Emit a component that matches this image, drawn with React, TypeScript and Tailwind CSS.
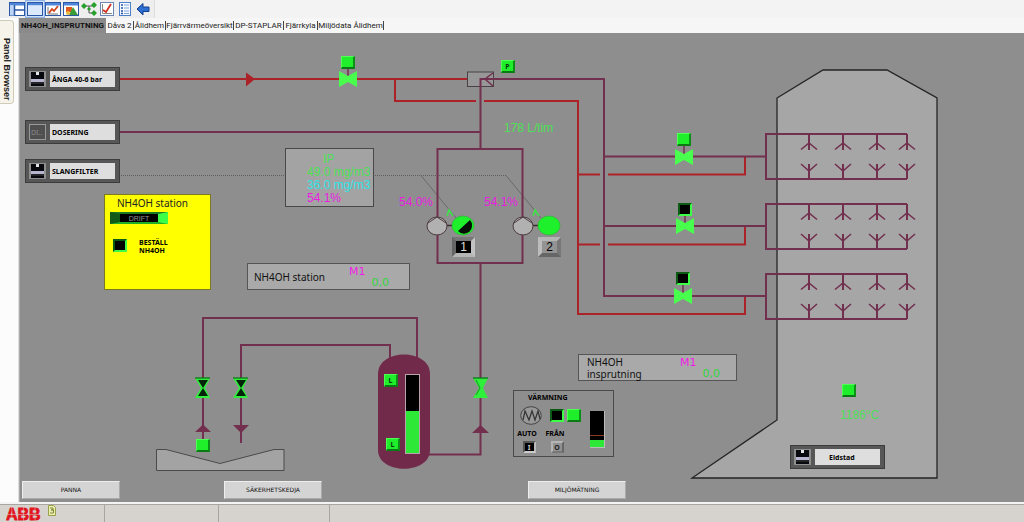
import React from "react";

const PIPE = "#722f4e";
const STEAM = "#ab2329";
const GREEN = "#2ef03a";

type LampProps = { className?: string; on?: boolean; children?: React.ReactNode; label: string };

/* Square bevelled lamp: lit is solid green, unlit has a black core. */
function Lamp({ className = "", on = true, children, label }: LampProps) {
  return (
    <button
      type="button"
      aria-label={label}
      className={
        "flex h-[13px] w-3.5 items-center justify-center p-0 text-[7px] leading-none font-bold text-[#063a0a] " +
        (on
          ? "border-t border-r-2 border-b-2 border-l border-t-[#52ff55] border-r-[#0d8f18] border-b-[#0b7a14] border-l-[#52ff55] bg-[#1fee2b] "
          : "border-2 border-t-[#0c5a14] border-r-[#3dff48] border-b-[#3dff48] border-l-[#0c5a14] bg-black ") +
        className
      }
    >
      {children}
    </button>
  );
}

function CabinetIcon() {
  return (
    <svg width="17" height="16" viewBox="0 0 17 16" className="shrink-0" aria-hidden="true">
      <rect width="17" height="16" fill="#8f8f8f" />
      <path d="M2 1h5v3h3V1h5v7H2z" fill="#08080f" />
      <path d="M7 1h3v3H7z" fill="#e4e4e4" />
      <path d="M2 8h13v3H2z" fill="#b7b5d0" />
      <path d="M2 11h13v4H2z" fill="#08080f" />
      <path d="M2 12h13" stroke="#666" strokeWidth="0.6" />
    </svg>
  );
}

function DiIcon() {
  return (
    <span className="flex h-4 w-[17px] shrink-0 items-center border border-[#9a9a9a] bg-[#505050] pl-px text-[7px] leading-none font-normal text-[#8a8a8a]">
      DI..
    </span>
  );
}

function Plate({ className, icon, children, indent = false }: { className: string; icon: React.ReactNode; children: string; indent?: boolean }) {
  return (
    <button
      type="button"
      className={
        "absolute flex h-6 w-[95px] items-center gap-1 border border-[#3c3c3c] bg-[#575757] pr-1 pl-[3px] text-left text-[7px] leading-none font-bold text-black " +
        className
      }
    >
      {icon}
      <span className={"flex h-4 flex-1 items-center bg-[#dedede] whitespace-nowrap " + (indent ? "pl-3.5" : "pl-0.5")}>{children}</span>
    </button>
  );
}

function Nozzles({ y }: { y: number }) {
  return (
    <g fill="none" stroke={PIPE} strokeWidth="2">
      <path d={`M907 ${y}H766V${y + 45}H907`} />
      {[809, 843, 877, 907].map((x) => (
        <React.Fragment key={x}>
          <path d={`M${x} ${y}v16`} />
          <path d={`M${x - 8} ${y + 15.5}L${x} ${y + 9}l8 6.5`} strokeWidth="1.6" />
          <path d={`M${x} ${y + 45}v-15`} />
          <path d={`M${x - 8} ${y + 30}L${x} ${y + 37}l8 -7`} strokeWidth="1.6" />
        </React.Fragment>
      ))}
    </g>
  );
}

function Valve({ x, y }: { x: number; y: number }) {
  return (
    <g>
      <path d={`M${x} ${y - 13}V${y}`} stroke={PIPE} strokeWidth="1.5" />
      <path d={`M${x - 9} ${y - 8}L${x} ${y - 3}L${x + 9} ${y - 8}V${y + 8}L${x} ${y + 3}L${x - 9} ${y + 8}z`} fill="#48ff4e" />
    </g>
  );
}

function UprightValve({ x, y, closed = false }: { x: number; y: number; closed?: boolean }) {
  return (
    <g>
      <path d={`M${x - 8} ${y - 10}H${x + 7}L${x + 2} ${y}L${x + 7} ${y + 10}H${x - 8}L${x - 2} ${y}z`} fill={GREEN} />
      <path d={`M${x - 8} ${y - 10}H${x + 7}`} stroke="#16801f" strokeWidth="1.5" />
      {closed ? (
        <path d={`M${x - 5} ${y - 8}H${x + 5}L${x} ${y}L${x + 5} ${y + 8}H${x - 5}L${x} ${y}z`} fill="#03240a" />
      ) : (
        <path d={`M${x - 5} ${y - 8}L${x - 1} ${y}L${x - 5} ${y + 7}`} fill="none" stroke="#149622" />
      )}
    </g>
  );
}

function Pump({ x, running }: { x: number; running: boolean }) {
  return (
    <g>
      <path d={`M${x + 10} 225.500h6`} stroke="#3a2a2a" strokeWidth="1.5" />
      <ellipse cx={x} cy="226" rx="10" ry="9" fill="#b1b1b1" stroke="#4c3b3f" />
      <path d={`M${x - 9} 223L${x} 217l9 6`} fill="none" stroke="#4c3b3f" />
      <ellipse cx={x + 26} cy="225.500" rx="11" ry="9.500" fill="#1ff02c" stroke="#27b52f" strokeWidth="0.6" />
      {running && <path d={`M${x + 33} 220a7 7 0 0 1 -12 11z`} fill="#061006" />}
      <path d={`M${x + 10} 216l2 -6 4 6`} fill="none" stroke="#3ce648" strokeWidth="1.5" />
    </g>
  );
}

function Piping() {
  return (
    <svg className="pointer-events-none absolute inset-0 h-full w-full overflow-visible" aria-hidden="true">
      <g transform="translate(-20 -33)" fill="none">
        <path d="M777 98L823 70H887L937 98V478H692L777 420z" fill="#a6a6a6" stroke="#252525" strokeWidth="1.3" />
        <path d="M156.500 449.500H166L220 463.500L274 449.500H284V470.500H156.500z" fill="#a3a3a3" stroke="#4a4a4a" />

        <g stroke="#606060" strokeDasharray="1 1">
          <path d="M119 175.500H506" />
          <path d="M421 175.500L456 218M506 175.500L541 218" strokeDasharray="none" strokeWidth="0.8" />
        </g>

        <g stroke={STEAM} strokeWidth="2">
          <path d="M119 79H468" />
          <path d="M395 79V101H476M484 101H578V314H745V296" />
          <path d="M578 174.500H600M608 174.500H745V157M578 244.500H600M608 244.500H745V227" />
        </g>
        <path d="M246 72.500V86.500L255 79z" fill={STEAM} />

        <rect x="467.500" y="72" width="26" height="14.500" fill="#979797" stroke="#4b4045" />
        <g stroke={PIPE} strokeWidth="2">
          <path d="M119 132H480" />
          <path d="M485 79H604V296H766M604 156.500H766M604 226H766" />
          <path d="M493 73L485 79L493 86" strokeWidth="1.5" />
          <path d="M485 79H480.500V149" />
          <path d="M437.500 149H522.500V263H437.500z" />
          <path d="M480.500 263V454.500H428" />
          <path d="M203 439V318H417V358" />
          <path d="M241 443V345H390V358" />
        </g>
        <Nozzles y={134} />
        <Nozzles y={204} />
        <Nozzles y={274} />

        <path d="M195 432L203 424.500L211 432zM233 425H249L241 433zM472 433L480.500 425L489 433z" fill={PIPE} />

        <path d="M378 374C378 348 430 348 430 374V450C430 475 378 475 378 450z" fill="#722a4b" />
        <Valve x={348} y={79} />
        <Valve x={684} y={157} />
        <Valve x={685} y={226} />
        <Valve x={683} y={296} />
        <UprightValve x={203} y={388} closed />
        <UprightValve x={241} y={388} closed />
        <UprightValve x={481} y={388} />
        <Pump x={437} running />
        <Pump x={523} running={false} />
      </g>
    </svg>
  );
}

function PumpButton({ className, children }: { className: string; children: string }) {
  return (
    <button type="button" className={"absolute flex h-5 w-[23px] items-center justify-center border-4 p-0 font-[Liberation_Sans] text-[12px] leading-none " + className}>
      {children}
    </button>
  );
}

function TotalBox({ className, children }: { className: string; children: React.ReactNode }) {
  return (
    <section className={"absolute flex h-[27px] items-center justify-between border border-[#555] bg-[#a9a9a9] " + className}>
      <h2 className="flex flex-col text-[10px] leading-[12px] text-[#111]">{children}</h2>
      <div className="flex w-10 flex-col font-[DejaVu_Sans] text-[11px] leading-[11px]">
        <span className="text-[#f01ce6]">M1</span>
        <span className="self-end text-[#2fd63b]">0,0</span>
      </div>
    </section>
  );
}

function HeatingPanel() {
  return (
    <section className="absolute top-[357px] left-[493px] flex h-[67px] w-[101px] justify-between border border-[#4a4a4a] pr-2 pl-[3px] text-[7px] leading-[8px] font-bold">
      <div className="flex flex-col">
        <h2 className="mt-[3px] ml-[11px]">VÄRMNING</h2>
        <div className="mt-1 ml-[3px] flex items-center gap-1">
          <svg width="22" height="19" viewBox="0 0 22 19" aria-hidden="true">
            <ellipse cx="11" cy="9.500" rx="10.300" ry="8.800" fill="#999" stroke="#444" />
            <path d="M3 14l2-9 4 9 3-9 3 9 3-9 2 8" fill="none" stroke="#333" strokeWidth="1.200" />
          </svg>
          <div className="ml-1 flex gap-[3px]">
            <Lamp on={false} label="Värmning från" />
            <Lamp label="Värmning till" />
          </div>
        </div>
        <div className="mt-[5px] flex gap-2">
          <label className="flex w-5 flex-col items-center gap-[3px]">
            AUTO
            <button type="button" className="ml-1 flex h-3 w-[13px] items-center justify-center border-2 border-t-[#555] border-r-[#bbb] border-b-[#ccc] border-l-[#555] bg-black text-[7px] leading-none text-[#ccc]">I</button>
          </label>
          <label className="flex w-5 flex-col items-center gap-[3px]">
            FRÅN
            <button type="button" className="ml-1 flex h-3 w-[13px] items-center justify-center border-2 border-t-[#b5b5b5] border-r-[#666] border-b-[#777] border-l-[#b5b5b5] bg-[#919191] text-[7px] leading-none text-[#222]">O</button>
          </label>
        </div>
      </div>
      <div className="mt-5 flex h-[37px] w-[15px] flex-col justify-end border-r border-b border-[#bbb] bg-black">
        <div className="h-px bg-[#8a3a1c]" />
        <div className="mt-1 h-[7px] bg-[#2ee838]" />
      </div>
    </section>
  );
}

function ToolButton({ label, children, active = false }: { label: string; children: React.ReactNode; active?: boolean }) {
  return (
    <button type="button" aria-label={label} className={"flex h-4 w-[18px] items-center justify-center p-0 " + (active ? "bg-[#cfe0f6] outline outline-[#8db2e3]" : "")}>
      <svg width="16" height="14" viewBox="0 0 16 14" aria-hidden="true">
        {children}
      </svg>
    </button>
  );
}

function WindowFrame() {
  return (
    <>
      <rect x="0.500" y="0.500" width="15" height="13" fill="#fff" stroke="#2b57a5" />
      <rect x="1" y="1" width="14" height="2.500" fill="#4f86d9" />
    </>
  );
}

function Toolbar() {
  return (
    <header className="flex h-[18px] shrink-0 bg-[#f3f3f3]">
      <div role="toolbar" aria-label="Verktyg" className="flex items-center border-r border-[#ddd] bg-[#eeeeee] pr-0.5 pl-2">
        <ToolButton label="Paneler">
          <WindowFrame />
          <path d="M1 3.500h4.500v10H1z" fill="#bcd3f5" />
          <path d="M5.500 3v10.500M5.500 8H15" stroke="#2b57a5" strokeWidth="1.500" />
        </ToolButton>
        <ToolButton label="Fönster" active>
          <WindowFrame />
          <path d="M1 3.500h14v9.500H1z" fill="#dce9fb" />
        </ToolButton>
        <ToolButton label="Trendfönster">
          <WindowFrame />
          <path d="M3 5v7h10" stroke="#777" fill="none" />
          <path d="M4 11l3-4 2 2 4-5" stroke="#d2451e" strokeWidth="1.800" fill="none" />
        </ToolButton>
        <ToolButton label="Grafik">
          <WindowFrame />
          <rect x="3" y="5" width="6" height="5" fill="#e2571e" />
          <path d="M10 5l5 8H6z" fill="#3a9c35" />
          <circle cx="5" cy="11" r="2" fill="#e7b93b" />
        </ToolButton>
        <ToolButton label="Struktur">
          <path d="M3 4h9M8 4v7h4" stroke="#555" fill="none" />
          <path d="M3 1l3 3-3 3-3-3zM13 0l3 3-3 3-3-3zM13 8l3 3-3 3-3-3z" fill="#27a02c" />
          <path d="M8 5l2 2-2 2-2-2z" fill="#27a02c" />
        </ToolButton>
        <ToolButton label="Trend">
          <rect x="1.500" y="0.500" width="13" height="13" fill="#fff" stroke="#6d86b8" />
          <path d="M3.500 2v9.500H13" stroke="#888" fill="none" />
          <path d="M4 8l3 2 5-8" stroke="#d22f1e" strokeWidth="1.800" fill="none" />
        </ToolButton>
        <ToolButton label="Lista">
          <rect x="2.500" y="0.500" width="11" height="13" fill="#f5f9ff" stroke="#4d7fc8" />
          <path d="M4 3h2M4 6h2M4 9h2M4 11.500h2" stroke="#1f4fa8" strokeWidth="1.600" />
          <path d="M7 3h5M7 6h5M7 9h5M7 11.500h5" stroke="#7fa3dc" />
        </ToolButton>
        <ToolButton label="Tillbaka">
          <path d="M2 7l6-5.500V5h6v4.500H8V13z" fill="#2d6ed2" stroke="#123f8c" />
        </ToolButton>
      </div>
    </header>
  );
}

const TABS = [
  { name: "NH4OH_INSPRUTNING", width: "w-[87px]" },
  { name: "Dåva 2", width: "w-[28px]" },
  { name: "Ålidhem", width: "w-8" },
  { name: "Fjärrvärmeöversikt", width: "w-[68px]" },
  { name: "DP-STAPLAR", width: "w-[50px]" },
  { name: "Fjärrkyla", width: "w-[34px]" },
  { name: "Miljödata Ålidhem", width: "w-[66px]" },
];

function Tabs() {
  return (
    <div role="tablist" className="flex h-[15px] shrink-0 items-stretch bg-[#f6f6f6] font-[Roboto] text-[8px] leading-none">
      {TABS.map((tab, i) => (
        <button
          key={tab.name}
          type="button"
          role="tab"
          aria-selected={i === 0}
          className={
            "p-0 whitespace-nowrap " +
            tab.width +
            (i === 0 ? " bg-[#8a8a8a] text-center font-bold text-[#111]" : " my-[3px] flex items-center justify-center border-r border-[#444] text-[#222]")
          }
        >
          {tab.name}
        </button>
      ))}
    </div>
  );
}

function StatusBar() {
  return (
    <footer className="flex h-5 shrink-0 border-t-2 border-[#f4f4f4] bg-[#d6d3ce]">
      <div className="flex w-[105px] gap-1.5 border-t border-r border-[#a9a6a1] pl-1.5">
        <svg width="36" height="17" viewBox="0 0 36 17" role="img" aria-label="ABB">
          <text x="0" y="15" fill="#e2131c" fontFamily="Liberation Sans" fontWeight="700" fontSize="16" stroke="#e2131c" strokeWidth="0.800">
            ABB
          </text>
          <path d="M0 9.500H36M5.800 0V17M17.500 0V17M29 0V17" stroke="#d6d3ce" strokeWidth="0.500" />
        </svg>
        <svg width="8" height="11" viewBox="0 0 8 11" aria-hidden="true">
          <path d="M0.500 0.500h5l2 2v8h-7z" fill="#eeeeb0" stroke="#9aa04a" />
          <path d="M2 3h3v2H3M3 5h2.500v3H2" fill="none" stroke="#7d8a3a" />
        </svg>
      </div>
      <div className="w-[114px] border-t border-r border-[#a9a6a1]" />
      <div className="w-[111px] border-t border-r border-[#a9a6a1]" />
      <div className="flex-1 border-t border-[#a9a6a1]" />
    </footer>
  );
}

const bottomButton = "h-[18px] w-[98px] border border-t-[#eee] border-r-[#aaa] border-b-[#aaa] border-l-[#eee] bg-[#d4d4d4] p-0 font-[DejaVu_Sans] text-[6px] leading-none text-[#111]";

export default function App() {
  return (
    <div className="flex min-h-screen flex-col bg-[#fcfcfc] font-[Noto_Sans,sans-serif] text-black">
      <Toolbar />
      <div className="flex flex-1">
        <aside className="w-[19px] shrink-0 border-r border-[#ddd] pt-0.5">
          <button type="button" className="flex h-[84px] w-3.5 items-center justify-center rounded-r-sm border border-l-0 border-[#cfcbb8] bg-[#f6f4ea] p-0 pt-3.5 font-[Liberation_Sans] text-[9px] leading-none font-bold text-[#222] [writing-mode:vertical-rl]">
            Panel Browser
          </button>
        </aside>
        <div className="flex min-w-0 flex-1 flex-col">
          <Tabs />
          <main className="flex flex-1 flex-col overflow-hidden border-l border-[#aaa] bg-[#8e8e8e]">
            <div className="relative min-h-[448px] flex-1">
              <Piping />

              <Plate className="top-[34px] left-[5px]" icon={<CabinetIcon />}>ÅNGA 40-6 bar</Plate>
              <Plate className="top-[87px] left-[5px]" icon={<DiIcon />}>DOSERING</Plate>
              <Plate className="top-[126px] left-[5px]" icon={<CabinetIcon />}>SLANGFILTER</Plate>
              <Plate className="top-[412px] left-[770px]" icon={<CabinetIcon />} indent>Eldstad</Plate>

              <section className="absolute top-[161px] left-[84px] flex h-[96px] w-[107px] flex-col items-start border border-[#7a7a20] bg-[#ffff00] pl-[5px]">
                <h2 className="mt-[3px] ml-[7px] text-[10px] leading-[11px] text-[#222]">NH4OH station</h2>
                <button type="button" className="mt-[3px] flex h-3 w-[58px] items-center border-y-2 border-r-[10px] border-l-[10px] border-t-[#1b7a22] border-r-[#3dff48] border-b-[#1fae2a] border-l-[#115a18] bg-black p-0 font-[Liberation_Sans] text-[7px] leading-none text-[#999]">
                  <span className="w-full text-center">DRIFT</span>
                </button>
                <div className="mt-[15px] ml-[3px] flex items-start gap-3">
                  <Lamp on={false} label="Beställ NH4OH" />
                  <span className="text-[7px] leading-[8px] font-bold">
                    BESTÄLL
                    <br />
                    NH4OH
                  </span>
                </div>
              </section>

              <section className="absolute top-[115px] left-[265px] flex h-[59px] w-[89px] flex-col border border-[#484848] bg-[#a3a3a3] pt-1 pl-[21px] font-[Liberation_Sans] text-[12px] leading-[13px] whitespace-nowrap">
                <span className="ml-4 text-[#4be055]">IP</span>
                <span className="text-[#4be055]">49.0 mg/m3</span>
                <span className="text-[#2fe3e6]">36.0 mg/m3</span>
                <span className="text-[#e91ce0]">54.1%</span>
              </section>

              <output className="absolute top-[88px] left-[484px] font-[Liberation_Sans] text-[12px] leading-[14px] text-[#4be055]">178 L/tim</output>
              <output className="absolute top-[162px] left-[379px] font-[Liberation_Sans] text-[12px] leading-[14px] text-[#e91ce0]">54.0%</output>
              <output className="absolute top-[162px] left-[464px] font-[Liberation_Sans] text-[12px] leading-[14px] text-[#e91ce0]">54.1%</output>
              <output className="absolute top-[375px] left-[820px] font-[Liberation_Sans] text-[12px] leading-[14px] text-[#4be055]">1186°C</output>

              <TotalBox className="top-[230px] left-[227px] w-[163px] pr-5 pl-1.5">NH4OH station</TotalBox>
              <TotalBox className="top-[321px] left-[558px] w-[159px] pr-4 pl-2">
                <span>NH4OH</span>
                <span>insprutning</span>
              </TotalBox>

              <HeatingPanel />

              <Lamp className="absolute top-[23px] left-[321px]" label="Ångventil" />
              <Lamp className="absolute top-[27px] left-[481px]" label="Tryck">P</Lamp>
              <Lamp className="absolute top-[100px] left-[657px]" label="Ventil 1" />
              <Lamp className="absolute top-[170px] left-[658px]" label="Ventil 2" on={false} />
              <Lamp className="absolute top-[239px] left-[656px]" label="Ventil 3" on={false} />
              <Lamp className="absolute top-[406px] left-[176px]" label="Brunn" />
              <Lamp className="absolute top-[341px] left-[364px]" label="Nivå hög">L</Lamp>
              <Lamp className="absolute top-[405px] left-[366px]" label="Nivå låg">L</Lamp>
              <Lamp className="absolute top-[351px] left-[822px]" label="Eldstad" />

              <div className="absolute top-[341px] left-[385px] flex h-20 w-[15px] flex-col justify-end border border-[#b9a4ad] bg-black">
                <div className="h-[42px] bg-[#2ee838]" />
              </div>

              <PumpButton className="top-[204px] left-[432px] border-t-[#777] border-r-[#c2c2c2] border-b-[#b5b5b5] border-l-[#666] bg-black text-[#ddd]">1</PumpButton>
              <PumpButton className="top-[204px] left-[518px] border-t-[#b5b5b5] border-r-[#777] border-b-[#666] border-l-[#bcbcbc] bg-[#939393] text-black">2</PumpButton>
            </div>

            <nav className="flex h-[21px] shrink-0 items-start pl-0.5">
              <button type="button" className={bottomButton}>PANNA</button>
              <button type="button" className={bottomButton + " ml-[104px]"}>SÄKERHETSKEDJA</button>
              <button type="button" className={bottomButton + " ml-[206px]"}>MILJÖMÄTNING</button>
            </nav>
          </main>
        </div>
      </div>
      <StatusBar />
    </div>
  );
}
